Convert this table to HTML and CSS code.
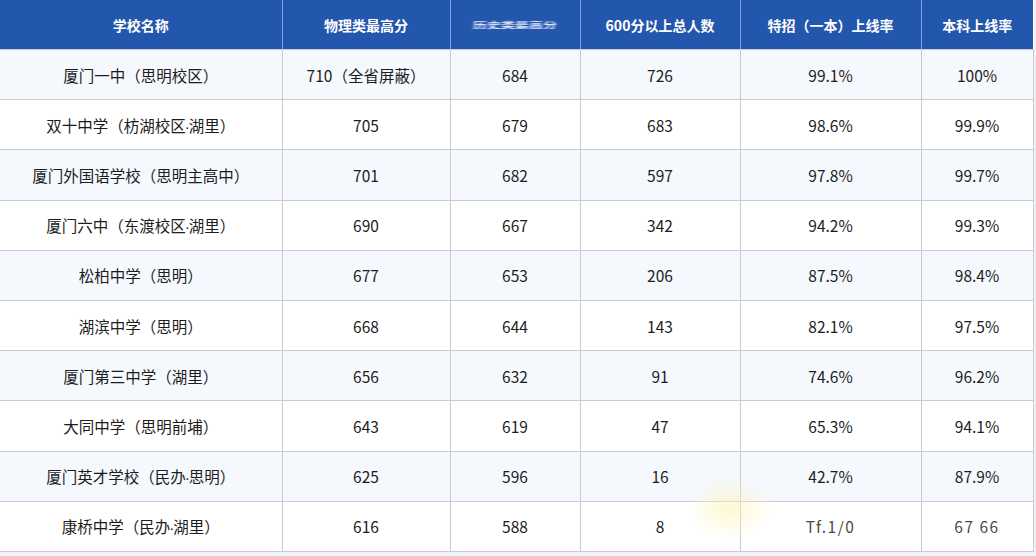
FILE: index.html
```html
<!DOCTYPE html>
<html lang="zh-CN">
<head>
<meta charset="utf-8">
<title>厦门高中成绩</title>
<link rel="stylesheet" href="styles.css">
</head>
<body>
<div class="page">
<table class="score-table">
  <colgroup>
    <col class="c1"><col class="c2"><col class="c3"><col class="c4"><col class="c5"><col class="c6">
  </colgroup>
  <thead>
    <tr>
      <th>学校名称</th>
      <th>物理类最高分</th>
      <th><span class="blurred">历史类最高分</span></th>
      <th>600分以上总人数</th>
      <th>特招（一本）上线率</th>
      <th>本科上线率</th>
    </tr>
  </thead>
  <tbody>
    <tr><td>厦门一中（思明校区）</td><td>710（全省屏蔽）</td><td>684</td><td>726</td><td>99.1%</td><td>100%</td></tr>
    <tr><td>双十中学（枋湖校区<span class="dot">·</span>湖里）</td><td>705</td><td>679</td><td>683</td><td>98.6%</td><td>99.9%</td></tr>
    <tr><td>厦门外国语学校（思明主高中）</td><td>701</td><td>682</td><td>597</td><td>97.8%</td><td>99.7%</td></tr>
    <tr><td>厦门六中（东渡校区<span class="dot">·</span>湖里）</td><td>690</td><td>667</td><td>342</td><td>94.2%</td><td>99.3%</td></tr>
    <tr><td>松柏中学（思明）</td><td>677</td><td>653</td><td>206</td><td>87.5%</td><td>98.4%</td></tr>
    <tr><td>湖滨中学（思明）</td><td>668</td><td>644</td><td>143</td><td>82.1%</td><td>97.5%</td></tr>
    <tr><td>厦门第三中学（湖里）</td><td>656</td><td>632</td><td>91</td><td>74.6%</td><td>96.2%</td></tr>
    <tr><td>大同中学（思明前埔）</td><td>643</td><td>619</td><td>47</td><td>65.3%</td><td>94.1%</td></tr>
    <tr><td>厦门英才学校（民办<span class="dot">·</span>思明）</td><td>625</td><td>596</td><td>16</td><td>42.7%</td><td>87.9%</td></tr>
    <tr><td>康桥中学（民办<span class="dot">·</span>湖里）</td><td>616</td><td>588</td><td>8</td><td><span class="garbled">Tf.1/0</span></td><td><span class="garbled">67 66</span></td></tr>
  </tbody>
</table>
<div class="glow"></div>
</div>
</body>
</html>
```

FILE: styles.css
```css
html, body {
  margin: 0;
  padding: 0;
  background: #f1f2f4;
}
.page {
  position: relative;
  width: 1036px;
  height: 556px;
  overflow: hidden;
  font-family: "Noto Sans CJK SC", "Noto Sans", sans-serif;
}
.score-table {
  width: 1033px;
  border-collapse: collapse;
  table-layout: fixed;
  background: #ffffff;
}
.c1 { width: 282px; }
.c2 { width: 168px; }
.c3 { width: 130px; }
.c4 { width: 160px; }
.c5 { width: 181px; }
.c6 { width: 112px; }

.score-table th {
  height: 49px;
  padding: 0;
  background: #2356ad;
  color: #ffffff;
  font-size: 14px;
  font-weight: 700;
  text-align: center;
  border-left: 1px solid #7ea6e6;
  border-bottom: 1px solid #c8cbd3;
}
.score-table th:first-child { border-left: none; }

.score-table td {
  height: 49.2px;
  padding: 0;
  text-align: center;
  font-size: 15.5px;
  color: #1c1c1c;
  border: 1px solid #c9cbd1;
}
.score-table td:first-child { border-left: none; }
.score-table tbody tr:nth-child(odd) td { background: #f5f8fd; }

.dot {
  font-family: "Liberation Sans", sans-serif;
  margin: 0 -1px;
}
.blurred {
  display: inline-block;
  filter: blur(1.4px);
  transform: scaleY(0.55);
  color: #e8f0ff;
}
.garbled {
  color: #4a4a4a;
  font-size: 15.5px;
  letter-spacing: 1.5px;
}
.glow {
  position: absolute;
  left: 690px;
  top: 478px;
  width: 80px;
  height: 60px;
  border-radius: 50%;
  background: radial-gradient(ellipse at center, rgba(255, 240, 170, 0.55) 0%, rgba(255, 245, 200, 0.25) 50%, rgba(255, 255, 255, 0) 75%);
  pointer-events: none;
}
```
